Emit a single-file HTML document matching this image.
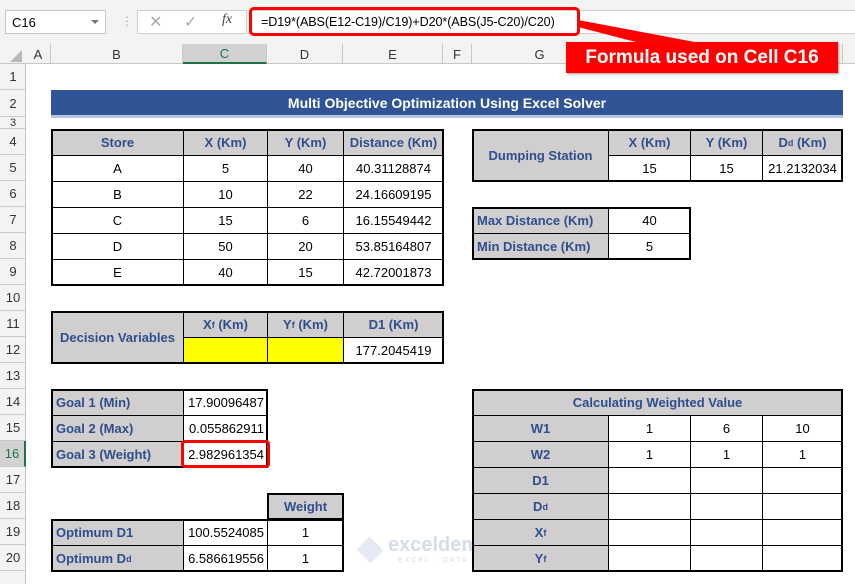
<!DOCTYPE html>
<html><head><meta charset="utf-8"><style>
*{margin:0;padding:0;box-sizing:border-box}
body{width:855px;height:584px;overflow:hidden;background:#fff;font-family:"Liberation Sans",sans-serif;position:relative}
.a{position:absolute}
.c{position:absolute;display:flex;align-items:center;justify-content:center;font-size:13px;color:#000;border:1px solid #000;white-space:nowrap;background:#fff}
.g{background:#d0cece;color:#2f4e8c;font-weight:bold}
.l{justify-content:flex-start;padding-left:4px}
.r{justify-content:flex-end;padding-right:3px}
.y{background:#ffff00}
.ch{position:absolute;top:44px;height:20px;font-size:13px;color:#333;display:flex;align-items:center;justify-content:center;border-right:1px solid #c8c8c8}
.rh{position:absolute;left:0;width:26px;font-size:13px;color:#333;display:flex;align-items:center;justify-content:center;border-bottom:1px solid #c8c8c8}
sub{font-size:9px;vertical-align:-1px}
</style></head><body>
<!-- toolbar -->
<div class="a" style="left:0;top:0;width:855px;height:44px;background:#f3f3f3"></div>
<div class="a" style="left:5px;top:10px;width:101px;height:24px;background:#fff;border:1px solid #c6c6c6;font-size:13px;padding:4px 6px">C16</div>
<div class="a" style="left:91px;top:20px;width:0;height:0;border-left:4px solid transparent;border-right:4px solid transparent;border-top:4px solid #777"></div>
<div class="a" style="left:121px;top:14px;color:#aaa;font-size:12px">⋮</div>
<div class="a" style="left:137px;top:10px;width:110px;height:24px;background:#fff;border:1px solid #d0d0d0"></div>
<div class="a" style="left:149px;top:12px;color:#aaa;font-size:16px">✕</div>
<div class="a" style="left:184px;top:12px;color:#aaa;font-size:16px">✓</div>
<div class="a" style="left:222px;top:12px;color:#444;font-size:14px;font-style:italic;font-family:'Liberation Serif',serif">fx</div>
<div class="a" style="left:248px;top:10px;width:607px;height:24px;background:#fff;border-top:1px solid #d0d0d0;border-bottom:1px solid #d0d0d0"></div>
<div class="a" style="left:249px;top:7px;width:331px;height:29px;border:3px solid #f00;border-radius:5px;font-size:12.6px;padding:5px 0 0 9px;white-space:nowrap;letter-spacing:-0.1px">=D19*(ABS(E12-C19)/C19)+D20*(ABS(J5-C20)/C20)</div>
<!-- column headers -->
<div class="a" style="left:0;top:44px;width:855px;height:20px;background:#f3f3f3;border-bottom:1px solid #c8c8c8"></div>
<div class="a" style="left:10px;top:50px;width:0;height:0;border-left:12px solid transparent;border-bottom:12px solid #b8b8b8"></div>
<div class="ch" style="left:26px;width:25px">A</div>
<div class="ch" style="left:51px;width:132px">B</div>
<div class="ch" style="left:183px;width:84px;background:#d2d2d2;border-bottom:2px solid #217346;color:#217346">C</div>
<div class="ch" style="left:267px;width:76px">D</div>
<div class="ch" style="left:343px;width:100px">E</div>
<div class="ch" style="left:443px;width:29px">F</div>
<div class="ch" style="left:472px;width:136px">G</div>
<div class="ch" style="left:608px;width:82px"></div>
<div class="ch" style="left:690px;width:72px"></div>
<div class="ch" style="left:762px;width:81px"></div>
<!-- callout -->
<svg class="a" style="left:0;top:0" width="855" height="80"><polygon points="578,20 578,27 640,43 700,43" fill="#f00"/></svg>
<div class="a" style="left:566px;top:42px;width:272px;height:31px;background:#f00;color:#fff;font-weight:bold;font-size:19px;display:flex;align-items:center;justify-content:center;box-shadow:1px 1px 2px #999">Formula used on Cell C16</div>
<!-- row headers -->
<div class="a" style="left:0;top:64px;width:26px;height:520px;background:#f3f3f3;border-right:1px solid #c8c8c8"></div>
<div class="rh" style="top:64px;height:26px">1</div>
<div class="rh" style="top:90px;height:27px">2</div>
<div class="rh" style="top:117px;height:12px;font-size:11px;line-height:10px">3</div>
<div class="rh" style="top:129px;height:26px">4</div>
<div class="rh" style="top:155px;height:26px">5</div>
<div class="rh" style="top:181px;height:26px">6</div>
<div class="rh" style="top:207px;height:26px">7</div>
<div class="rh" style="top:233px;height:26px">8</div>
<div class="rh" style="top:259px;height:26px">9</div>
<div class="rh" style="top:285px;height:26px">10</div>
<div class="rh" style="top:311px;height:26px">11</div>
<div class="rh" style="top:337px;height:26px">12</div>
<div class="rh" style="top:363px;height:26px">13</div>
<div class="rh" style="top:389px;height:26px">14</div>
<div class="rh" style="top:415px;height:26px">15</div>
<div class="rh" style="top:441px;height:26px;background:#d2d2d2;border-right:2px solid #217346;color:#217346">16</div>
<div class="rh" style="top:467px;height:26px">17</div>
<div class="rh" style="top:493px;height:26px">18</div>
<div class="rh" style="top:519px;height:26px">19</div>
<div class="rh" style="top:545px;height:26px">20</div>
<!-- title -->
<div class="a" style="left:51px;top:90px;width:792px;height:25px;background:#305496;color:#fff;font-weight:bold;font-size:14px;display:flex;align-items:center;justify-content:center">Multi Objective Optimization Using Excel Solver</div>
<div class="a" style="left:51px;top:115px;width:792px;height:3px;background:#b4c6e7"></div>
<!-- store table -->
<div class="c g" style="left:51px;top:129px;width:133px;height:27px">Store</div>
<div class="c g" style="left:183px;top:129px;width:85px;height:27px">X (Km)</div>
<div class="c g" style="left:267px;top:129px;width:77px;height:27px">Y (Km)</div>
<div class="c g" style="left:343px;top:129px;width:101px;height:27px">Distance (Km)</div>
<div class="c" style="left:51px;top:155px;width:133px;height:27px">A</div><div class="c" style="left:183px;top:155px;width:85px;height:27px">5</div><div class="c" style="left:267px;top:155px;width:77px;height:27px">40</div><div class="c" style="left:343px;top:155px;width:101px;height:27px">40.31128874</div>
<div class="c" style="left:51px;top:181px;width:133px;height:27px">B</div><div class="c" style="left:183px;top:181px;width:85px;height:27px">10</div><div class="c" style="left:267px;top:181px;width:77px;height:27px">22</div><div class="c" style="left:343px;top:181px;width:101px;height:27px">24.16609195</div>
<div class="c" style="left:51px;top:207px;width:133px;height:27px">C</div><div class="c" style="left:183px;top:207px;width:85px;height:27px">15</div><div class="c" style="left:267px;top:207px;width:77px;height:27px">6</div><div class="c" style="left:343px;top:207px;width:101px;height:27px">16.15549442</div>
<div class="c" style="left:51px;top:233px;width:133px;height:27px">D</div><div class="c" style="left:183px;top:233px;width:85px;height:27px">50</div><div class="c" style="left:267px;top:233px;width:77px;height:27px">20</div><div class="c" style="left:343px;top:233px;width:101px;height:27px">53.85164807</div>
<div class="c" style="left:51px;top:259px;width:133px;height:27px">E</div><div class="c" style="left:183px;top:259px;width:85px;height:27px">40</div><div class="c" style="left:267px;top:259px;width:77px;height:27px">15</div><div class="c" style="left:343px;top:259px;width:101px;height:27px">42.72001873</div>
<div class="a" style="left:51px;top:129px;width:393px;height:157px;border:2px solid #000"></div>
<!-- dumping -->
<div class="c g" style="left:472px;top:129px;width:137px;height:53px">Dumping Station</div>
<div class="c g" style="left:608px;top:129px;width:83px;height:27px">X (Km)</div>
<div class="c g" style="left:690px;top:129px;width:73px;height:27px">Y (Km)</div>
<div class="c g" style="left:762px;top:129px;width:81px;height:27px">D<sub>d</sub>&nbsp;(Km)</div>
<div class="c" style="left:608px;top:155px;width:83px;height:27px">15</div>
<div class="c" style="left:690px;top:155px;width:73px;height:27px">15</div>
<div class="c" style="left:762px;top:155px;width:81px;height:27px">21.2132034</div>
<div class="a" style="left:472px;top:129px;width:371px;height:53px;border:2px solid #000"></div>
<!-- max/min -->
<div class="c g l" style="left:472px;top:207px;width:137px;height:27px">Max Distance (Km)</div>
<div class="c" style="left:608px;top:207px;width:83px;height:27px">40</div>
<div class="c g l" style="left:472px;top:233px;width:137px;height:27px">Min Distance (Km)</div>
<div class="c" style="left:608px;top:233px;width:83px;height:27px">5</div>
<div class="a" style="left:472px;top:207px;width:219px;height:53px;border:2px solid #000"></div>
<!-- decision -->
<div class="c g" style="left:51px;top:311px;width:133px;height:53px">Decision Variables</div>
<div class="c g" style="left:183px;top:311px;width:85px;height:27px">X<sub>f</sub>&nbsp;(Km)</div>
<div class="c g" style="left:267px;top:311px;width:77px;height:27px">Y<sub>f</sub>&nbsp;(Km)</div>
<div class="c g" style="left:343px;top:311px;width:101px;height:27px">D1 (Km)</div>
<div class="c y" style="left:183px;top:337px;width:85px;height:27px"></div>
<div class="c y" style="left:267px;top:337px;width:77px;height:27px"></div>
<div class="c" style="left:343px;top:337px;width:101px;height:27px">177.2045419</div>
<div class="a" style="left:51px;top:311px;width:393px;height:53px;border:2px solid #000"></div>
<!-- goals -->
<div class="c g l" style="left:51px;top:389px;width:133px;height:27px">Goal 1 (Min)</div><div class="c r" style="left:183px;top:389px;width:85px;height:27px">17.90096487</div>
<div class="c g l" style="left:51px;top:415px;width:133px;height:27px">Goal 2 (Max)</div><div class="c r" style="left:183px;top:415px;width:85px;height:27px">0.055862911</div>
<div class="c g l" style="left:51px;top:441px;width:133px;height:27px">Goal 3 (Weight)</div><div class="c r" style="left:183px;top:441px;width:85px;height:27px">2.982961354</div>
<div class="a" style="left:51px;top:389px;width:217px;height:79px;border:2px solid #000"></div>
<div class="a" style="left:181px;top:440px;width:89px;height:28px;border:3px solid #f00;border-radius:4px"></div>
<!-- optimum -->
<div class="c g" style="left:267px;top:493px;width:77px;height:27px;border-width:2px">Weight</div>
<div class="c g l" style="left:51px;top:519px;width:133px;height:27px">Optimum D1</div><div class="c r" style="left:183px;top:519px;width:85px;height:27px">100.5524085</div><div class="c" style="left:267px;top:519px;width:77px;height:27px">1</div>
<div class="c g l" style="left:51px;top:545px;width:133px;height:27px">Optimum D<sub>d</sub></div><div class="c r" style="left:183px;top:545px;width:85px;height:27px">6.586619556</div><div class="c" style="left:267px;top:545px;width:77px;height:27px">1</div>
<div class="a" style="left:51px;top:519px;width:293px;height:53px;border:2px solid #000"></div>
<!-- watermark -->
<div class="a" style="left:356px;top:537px;width:28px;height:26px;background:#e4e9f3;transform:rotate(45deg) scale(.7)"></div>
<div class="a" style="left:388px;top:534px;color:#d6dde9;font-weight:bold;font-size:20px">exceldemy</div>
<div class="a" style="left:398px;top:557px;color:#d6dde9;font-size:7px;letter-spacing:2px">EXCEL · DATA · BI</div>
<!-- calc table -->
<div class="c g" style="left:472px;top:389px;width:371px;height:27px">Calculating Weighted Value</div>
<div class="c g" style="left:472px;top:415px;width:137px;height:27px">W1</div><div class="c" style="left:608px;top:415px;width:83px;height:27px">1</div><div class="c" style="left:690px;top:415px;width:73px;height:27px">6</div><div class="c" style="left:762px;top:415px;width:81px;height:27px">10</div>
<div class="c g" style="left:472px;top:441px;width:137px;height:27px">W2</div><div class="c" style="left:608px;top:441px;width:83px;height:27px">1</div><div class="c" style="left:690px;top:441px;width:73px;height:27px">1</div><div class="c" style="left:762px;top:441px;width:81px;height:27px">1</div>
<div class="c g" style="left:472px;top:467px;width:137px;height:27px">D1</div><div class="c" style="left:608px;top:467px;width:83px;height:27px"></div><div class="c" style="left:690px;top:467px;width:73px;height:27px"></div><div class="c" style="left:762px;top:467px;width:81px;height:27px"></div>
<div class="c g" style="left:472px;top:493px;width:137px;height:27px">D<sub>d</sub></div><div class="c" style="left:608px;top:493px;width:83px;height:27px"></div><div class="c" style="left:690px;top:493px;width:73px;height:27px"></div><div class="c" style="left:762px;top:493px;width:81px;height:27px"></div>
<div class="c g" style="left:472px;top:519px;width:137px;height:27px">X<sub>f</sub></div><div class="c" style="left:608px;top:519px;width:83px;height:27px"></div><div class="c" style="left:690px;top:519px;width:73px;height:27px"></div><div class="c" style="left:762px;top:519px;width:81px;height:27px"></div>
<div class="c g" style="left:472px;top:545px;width:137px;height:27px">Y<sub>f</sub></div><div class="c" style="left:608px;top:545px;width:83px;height:27px"></div><div class="c" style="left:690px;top:545px;width:73px;height:27px"></div><div class="c" style="left:762px;top:545px;width:81px;height:27px"></div>
<div class="a" style="left:472px;top:389px;width:371px;height:183px;border:2px solid #000"></div>
</body></html>
